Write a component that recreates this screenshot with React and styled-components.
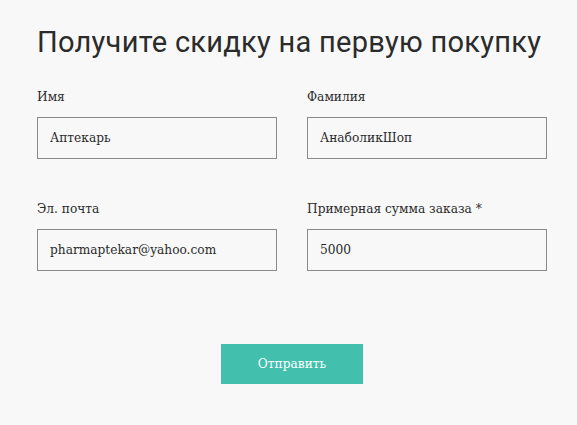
import React from "react";
import styled, { createGlobalStyle } from "styled-components";

const GlobalStyle = createGlobalStyle`
  body {
    margin: 0;
    background: #f8f8f8;
  }
`;

const Page = styled.div`
  padding: 25px 30px 40px 37px;
  min-height: 425px;
  box-sizing: border-box;
`;
const Title = styled.h1`
  margin: 0 0 30px;
  font-family: Roboto, sans-serif;
  font-size: 29px;
  font-weight: 400;
  line-height: 34px;
  letter-spacing: 0.28px;
  white-space: nowrap;
  color: #2b2b2b;
`;
const Grid = styled.div`
  display: grid;
  grid-template-columns: 240px 240px;
  column-gap: 30px;
  row-gap: 42px;
`;
const Field = styled.label`
  display: flex;
  flex-direction: column;
  gap: 12px;
`;
const Label = styled.span`
  font-family: "DejaVu Serif", serif;
  font-size: 12.2px;
  line-height: 16px;
  color: #2b2b2b;
`;
const Input = styled.input`
  box-sizing: border-box;
  width: 240px;
  height: 42px;
  padding: 0 12px;
  border: 1px solid #8a8a8a;
  background: #f8f8f8;
  font-family: "DejaVu Serif", serif;
  font-size: 12.2px;
  color: #2b2b2b;
  outline: none;
`;
const Actions = styled.div`
  display: flex;
  justify-content: center;
  padding-top: 73px;
`;
const Button = styled.button`
  width: 142px;
  height: 40px;
  border: none;
  background: #43bfae;
  color: #fff;
  font-family: "DejaVu Serif", serif;
  font-size: 12.2px;
  cursor: pointer;
`;

const fields = [
  { label: "Имя", value: "Аптекарь" },
  { label: "Фамилия", value: "АнаболикШоп" },
  { label: "Эл. почта", value: "pharmaptekar@yahoo.com" },
  { label: "Примерная сумма заказа *", value: "5000" },
];

export default function App() {
  return (
    <Page>
      <GlobalStyle />
      <Title>Получите скидку на первую покупку</Title>
      <Grid>
        {fields.map((f) => (
          <Field key={f.label}>
            <Label>{f.label}</Label>
            <Input defaultValue={f.value} />
          </Field>
        ))}
      </Grid>
      <Actions>
        <Button>Отправить</Button>
      </Actions>
    </Page>
  );
}
